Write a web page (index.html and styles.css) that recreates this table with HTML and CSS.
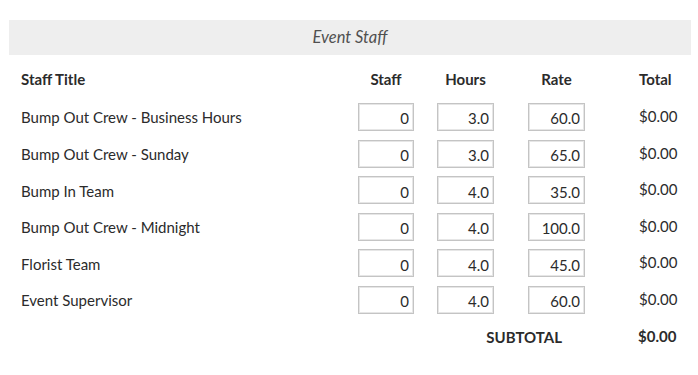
FILE: index.html
```html
<!DOCTYPE html>
<html lang="en">
<head>
    <meta charset="UTF-8">
    <title>Event Staff</title>
    <link rel="stylesheet" href="styles.css">
</head>
<body>
<div class="section">
    <h2 class="section-title">Event Staff</h2>

    <div class="staff-grid">
        <div class="head head-title">Staff Title</div>
        <div class="head">Staff</div>
        <div class="head">Hours</div>
        <div class="head">Rate</div>
        <div class="head head-total">Total</div>

        <div class="title">Bump Out Crew - Business Hours</div>
        <div class="cell"><input class="num num-staff" type="text" value="0"></div>
        <div class="cell"><input class="num" type="text" value="3.0"></div>
        <div class="cell"><input class="num" type="text" value="60.0"></div>
        <div class="total">$0.00</div>

        <div class="title">Bump Out Crew - Sunday</div>
        <div class="cell"><input class="num num-staff" type="text" value="0"></div>
        <div class="cell"><input class="num" type="text" value="3.0"></div>
        <div class="cell"><input class="num" type="text" value="65.0"></div>
        <div class="total">$0.00</div>

        <div class="title">Bump In Team</div>
        <div class="cell"><input class="num num-staff" type="text" value="0"></div>
        <div class="cell"><input class="num" type="text" value="4.0"></div>
        <div class="cell"><input class="num" type="text" value="35.0"></div>
        <div class="total">$0.00</div>

        <div class="title">Bump Out Crew - Midnight</div>
        <div class="cell"><input class="num num-staff" type="text" value="0"></div>
        <div class="cell"><input class="num" type="text" value="4.0"></div>
        <div class="cell"><input class="num" type="text" value="100.0"></div>
        <div class="total">$0.00</div>

        <div class="title">Florist Team</div>
        <div class="cell"><input class="num num-staff" type="text" value="0"></div>
        <div class="cell"><input class="num" type="text" value="4.0"></div>
        <div class="cell"><input class="num" type="text" value="45.0"></div>
        <div class="total">$0.00</div>

        <div class="title">Event Supervisor</div>
        <div class="cell"><input class="num num-staff" type="text" value="0"></div>
        <div class="cell"><input class="num" type="text" value="4.0"></div>
        <div class="cell"><input class="num" type="text" value="60.0"></div>
        <div class="total">$0.00</div>

        <div class="subtotal-label">SUBTOTAL</div>
        <div class="total subtotal">$0.00</div>
    </div>
</div>
</body>
</html>
```

FILE: styles.css
```css
*{
    margin: 0;
    padding: 0;
    box-sizing: border-box;
}
body{
    background: #fff;
    color: #2b2b2b;
    font-family: Lato, "Open Sans", Arial, sans-serif;
    font-size: 15px;
}
.section{
    width: 682px;
    margin: 20px 0 0 9px;
}
.section-title{
    height: 35px;
    line-height: 35px;
    background-color: #eeeeee;
    text-align: center;
    font-size: 16.5px;
    font-weight: normal;
    font-style: italic;
    color: #505050;
}
.staff-grid{
    display: grid;
    grid-template-columns: 1fr 80px 79px 103px 83px;
    grid-template-rows: 39.4px;
    grid-auto-rows: 28px;
    row-gap: 8.6px;
    padding-left: 12px;
    align-items: center;
}
.head{
    align-self: start;
    padding-top: 15px;
    line-height: 18px;
    font-weight: bold;
    text-align: center;
}
.head-title{
    text-align: left;
}
.head-total{
    text-align: left;
    padding-left: 31px;
}
.title{
    padding-top: 1px;
}
.cell{
    display: flex;
    justify-content: center;
}
.num{
    width: 57px;
    height: 28px;
    border: 1px solid #c4c4c4;
    box-shadow: inset 0 0 0 1px #e6e6e6;
    background: #fff;
    font-family: Lato, "Open Sans", Arial, sans-serif;
    font-size: 15px;
    color: #2b2b2b;
    text-align: right;
    padding: 3px 4px 0 4px;
    outline: none;
}
.num-staff{
    width: 56px;
}
.total{
    padding-left: 31px;
    padding-bottom: 2px;
}
.subtotal-label{
    grid-column: 2 / 5;
    text-align: right;
    padding-right: 46px;
    font-weight: bold;
}
.subtotal{
    font-weight: bold;
    padding-left: 30px;
}
```
